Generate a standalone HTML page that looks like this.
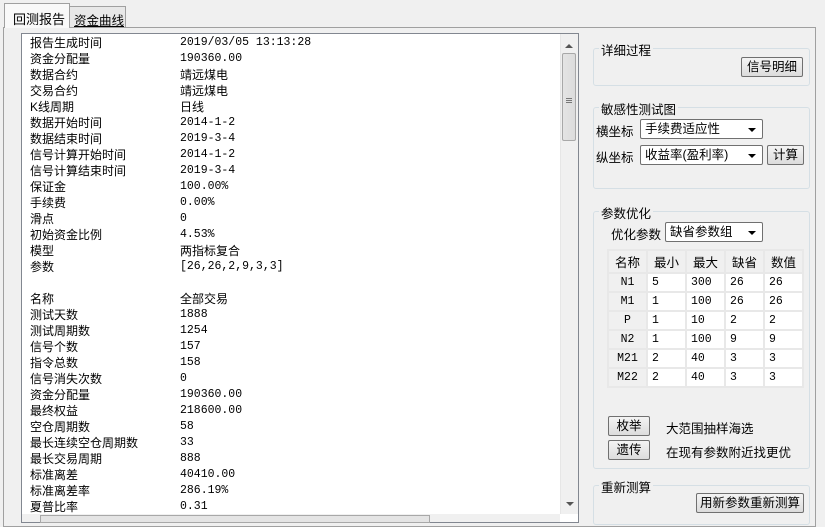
<!DOCTYPE html>
<html><head><meta charset="utf-8"><style>
*{margin:0;padding:0;box-sizing:border-box}
body{width:825px;height:521px;background:#f0f0f0;font-family:"Liberation Sans","Noto Sans CJK SC","WenQuanYi Zen Hei",sans-serif;font-size:12px;color:#000;position:relative;overflow:hidden}
.a{position:absolute;white-space:nowrap}
.tab1{left:4px;top:3px;width:66px;height:25px;background:#f9f9f9;border:1px solid #a0a0a0;border-bottom:none;padding:5px 0 0 8px;font-size:13px;z-index:2}
.tab2{left:69px;top:6px;width:57px;height:21px;background:#e8e8e8;border:1px solid #a0a0a0;border-bottom:none;padding:3px 0 0 4px;font-size:12.5px;text-decoration:underline}
.panel{left:3px;top:27px;width:813px;height:500px;border:1px solid #a0a0a0;background:#f0f0f0}
.list{left:21px;top:33px;width:558px;height:490px;border:1px solid #828790;background:#fff}
.row{position:absolute;left:8px;height:16px;line-height:16px;white-space:nowrap}
.row span{position:absolute;left:150px;font-family:"Liberation Mono","Noto Sans CJK SC",monospace;font-size:11.5px}
.vs{left:560px;top:34px;width:18px;height:480px;background:#f0f0f0;border-left:1px solid #e6e6e6}
.thumb{left:562px;top:53px;width:14px;height:88px;background:linear-gradient(90deg,#e4e4e4,#dcdcdc);border:1px solid #a8a8a8;border-radius:2px}
.hs{left:22px;top:514px;width:538px;height:8px;background:#f0f0f0}
.grp{border:1px solid #d5dfe5;border-radius:3px}
.gt{background:#f0f0f0;padding:0 2px;font-size:12.5px}
.btn{border:1px solid #707070;border-radius:2px;background:linear-gradient(#f4f4f4,#dcdcdc);text-align:center;font-size:12.5px;line-height:18px;height:20px}
.cb{border:1px solid #707070;border-radius:2px;background:#fff;height:20px;line-height:18px;padding-left:4px;font-size:12.5px}
.cb:after{content:"";position:absolute;right:6px;top:8px;border:4px solid transparent;border-top:4px solid #000;border-bottom:none}
table{border-collapse:collapse;font-size:12px}
td{border:2px solid #e8e8e8;height:19px;padding-left:4px;background:#fff;font-family:"Liberation Mono",monospace;font-size:11.5px}
tr.h td{height:23px;background:#f0f0f0;text-align:center;padding:0;font-family:"Liberation Sans","Noto Sans CJK SC",sans-serif;font-size:12.5px}
td.n{background:#f0f0f0;text-align:center;padding:0}
</style></head><body>
<div class="a panel"></div>
<div class="a tab2">资金曲线</div>
<div class="a tab1">回测报告</div>
<div class="a list">
<div class="row" style="top:1px">报告生成时间<span>2019/03/05 13:13:28</span></div>
<div class="row" style="top:17px">资金分配量<span>190360.00</span></div>
<div class="row" style="top:33px">数据合约<span style="font-family:'Noto Sans CJK SC',sans-serif;font-size:12px">靖远煤电</span></div>
<div class="row" style="top:49px">交易合约<span style="font-family:'Noto Sans CJK SC',sans-serif;font-size:12px">靖远煤电</span></div>
<div class="row" style="top:65px">K线周期<span style="font-family:'Noto Sans CJK SC',sans-serif;font-size:12px">日线</span></div>
<div class="row" style="top:81px">数据开始时间<span>2014-1-2</span></div>
<div class="row" style="top:97px">数据结束时间<span>2019-3-4</span></div>
<div class="row" style="top:113px">信号计算开始时间<span>2014-1-2</span></div>
<div class="row" style="top:129px">信号计算结束时间<span>2019-3-4</span></div>
<div class="row" style="top:145px">保证金<span>100.00%</span></div>
<div class="row" style="top:161px">手续费<span>0.00%</span></div>
<div class="row" style="top:177px">滑点<span>0</span></div>
<div class="row" style="top:193px">初始资金比例<span>4.53%</span></div>
<div class="row" style="top:209px">模型<span style="font-family:'Noto Sans CJK SC',sans-serif;font-size:12px">两指标复合</span></div>
<div class="row" style="top:225px">参数<span>[26,26,2,9,3,3]</span></div>
<div class="row" style="top:257px">名称<span style="font-family:'Noto Sans CJK SC',sans-serif;font-size:12px">全部交易</span></div>
<div class="row" style="top:273px">测试天数<span>1888</span></div>
<div class="row" style="top:289px">测试周期数<span>1254</span></div>
<div class="row" style="top:305px">信号个数<span>157</span></div>
<div class="row" style="top:321px">指令总数<span>158</span></div>
<div class="row" style="top:337px">信号消失次数<span>0</span></div>
<div class="row" style="top:353px">资金分配量<span>190360.00</span></div>
<div class="row" style="top:369px">最终权益<span>218600.00</span></div>
<div class="row" style="top:385px">空仓周期数<span>58</span></div>
<div class="row" style="top:401px">最长连续空仓周期数<span>33</span></div>
<div class="row" style="top:417px">最长交易周期<span>888</span></div>
<div class="row" style="top:433px">标准离差<span>40410.00</span></div>
<div class="row" style="top:449px">标准离差率<span>286.19%</span></div>
<div class="row" style="top:465px">夏普比率<span>0.31</span></div>
</div>
<div class="a vs"></div>
<div class="a" style="left:565px;top:44px;border:4px solid transparent;border-bottom:4px solid #555;border-top:none"></div>
<div class="a thumb"></div>
<div class="a" style="left:566px;top:98px;width:6px;height:5px;border-top:1px solid #777;border-bottom:1px solid #777"></div>
<div class="a" style="left:566px;top:100px;width:6px;height:1px;background:#777"></div>
<div class="a" style="left:566px;top:502px;border:4px solid transparent;border-top:4px solid #555;border-bottom:none"></div>
<div class="a hs"></div>
<div class="a" style="left:40px;top:515px;width:390px;height:8px;border:1px solid #a8a8a8;background:#e4e4e4"></div>

<div class="a grp" style="left:593px;top:48px;width:217px;height:38px"></div>
<div class="a gt" style="left:599px;top:40px">详细过程</div>
<div class="a btn" style="left:741px;top:57px;width:62px">信号明细</div>

<div class="a grp" style="left:593px;top:107px;width:217px;height:82px"></div>
<div class="a gt" style="left:599px;top:99px">敏感性测试图</div>
<div class="a" style="left:596px;top:121px;font-size:12.5px">横坐标</div>
<div class="a cb" style="left:640px;top:119px;width:123px">手续费适应性</div>
<div class="a" style="left:596px;top:147px;font-size:12.5px">纵坐标</div>
<div class="a cb" style="left:640px;top:145px;width:123px">收益率(盈利率)</div>
<div class="a btn" style="left:767px;top:145px;width:37px">计算</div>

<div class="a grp" style="left:593px;top:211px;width:217px;height:258px"></div>
<div class="a gt" style="left:599px;top:203px">参数优化</div>
<div class="a" style="left:611px;top:224px;font-size:12.5px">优化参数</div>
<div class="a cb" style="left:665px;top:222px;width:98px">缺省参数组</div>
<table class="a" style="left:607px;top:249px;width:197px">
<tr class="h"><td>名称</td><td>最小</td><td>最大</td><td>缺省</td><td>数值</td></tr>
<tr><td class="n">N1</td><td>5</td><td>300</td><td>26</td><td>26</td></tr>
<tr><td class="n">M1</td><td>1</td><td>100</td><td>26</td><td>26</td></tr>
<tr><td class="n">P</td><td>1</td><td>10</td><td>2</td><td>2</td></tr>
<tr><td class="n">N2</td><td>1</td><td>100</td><td>9</td><td>9</td></tr>
<tr><td class="n">M21</td><td>2</td><td>40</td><td>3</td><td>3</td></tr>
<tr><td class="n">M22</td><td>2</td><td>40</td><td>3</td><td>3</td></tr>
</table>
<div class="a btn" style="left:608px;top:416px;width:42px">枚举</div>
<div class="a" style="left:666px;top:418px;font-size:12.5px">大范围抽样海选</div>
<div class="a btn" style="left:608px;top:440px;width:42px">遗传</div>
<div class="a" style="left:666px;top:442px;font-size:12.5px">在现有参数附近找更优</div>

<div class="a grp" style="left:593px;top:485px;width:217px;height:40px"></div>
<div class="a gt" style="left:599px;top:477px">重新测算</div>
<div class="a btn" style="left:696px;top:493px;width:108px">用新参数重新测算</div>
</body></html>
